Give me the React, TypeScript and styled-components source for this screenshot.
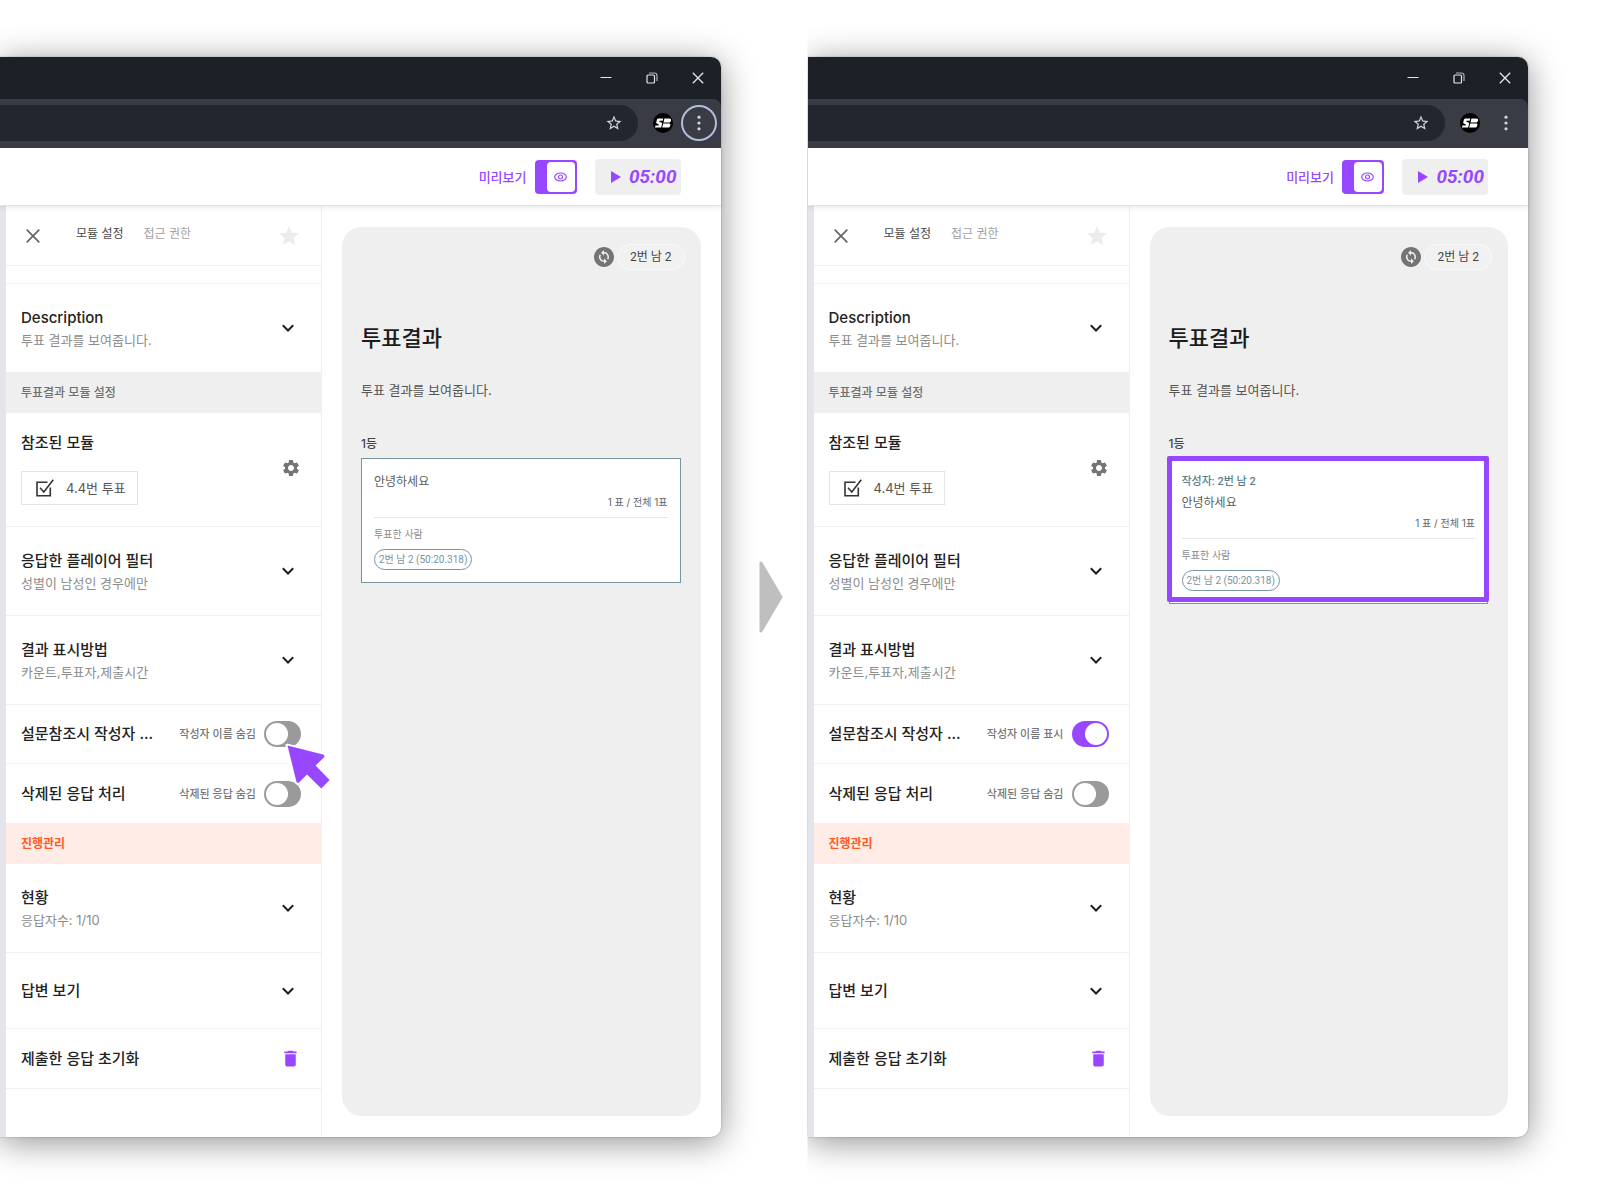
import React, { useId, useState } from 'react';
import styled, { createGlobalStyle, css } from 'styled-components';
import { MdChangeCircle, MdDelete, MdSettings, MdStar, MdStarBorder } from 'react-icons/md';

const color = {
  purple: '#9747ff',
  ink: '#222222',
  text: '#555555',
  muted: '#8c8c8c',
  line: '#f0f0f1',
  surface: '#efefef',
  slate: '#7895a3',
  slateDark: '#5c7d8e',
};

const compactFont = 'Roboto, "Noto Sans CJK KR", sans-serif';

const GlobalStyle = createGlobalStyle`
  *, *::before, *::after { box-sizing: border-box; }
  body {
    margin: 0;
    background: #ffffff;
    color: ${color.ink};
    font-family: Inter, "Noto Sans CJK KR", sans-serif;
    font-size: 13px;
    line-height: 22px;
    overflow-x: hidden;
  }
  button, input { font: inherit; color: inherit; }
  button { margin: 0; padding: 0; border: 0; background: none; cursor: pointer; }
  h1, h2, h3, p { margin: 0; font-weight: 400; }
  svg { display: block; flex: none; }
`;

const Page = styled.main`
  display: grid;
  grid-template-columns: 1fr 1fr;
  padding: 57px 0 56px;
`;

const Half = styled.section`
  display: grid;
  grid-template-columns: minmax(0, 1fr) 87px;
  align-items: center;
  clip-path: inset(-57px 0 -57px 0);
`;

const StepArrow = styled.svg`
  justify-self: center;
  margin-left: 14px;
`;

const Window = styled.div`
  border-radius: 0 10px 10px 0;
  background: #ffffff;
  box-shadow: 0 5px 34px rgba(0, 0, 0, 0.44), 0 0 2px rgba(0, 0, 0, 0.3);
`;

const ChromeBackdrop = styled.div`
  border-radius: 0 10px 0 0;
  background: #1c2027;
`;

const TitleBar = styled.div`
  display: flex;
  justify-content: flex-end;
  height: 42px;
  color: #e6e6e8;
`;

const CaptionButton = styled.button`
  display: grid;
  place-items: center;
  width: 46px;
`;

const Toolbar = styled.div`
  display: flex;
  align-items: center;
  height: 49px;
  padding: 0 4px 2px 0;
  border-radius: 0 8px 0 0;
  background: #393b45;
  color: #d4d5da;
`;

const AddressBar = styled.div`
  display: flex;
  flex: 1;
  align-items: center;
  height: 36px;
  margin-right: 15px;
  padding-right: 15px;
  border-radius: 0 18px 18px 0;
  background: #23262f;
`;

const AddressInput = styled.input`
  flex: 1;
  min-width: 0;
  border: 0;
  outline: 0;
  background: transparent;
`;

const ProfileButton = styled.button`
  margin-right: 8px;
`;

const MenuButton = styled.button<{ $ringed: boolean }>`
  display: grid;
  place-items: center;
  width: 36px;
  height: 36px;
  border: 2px solid ${(p) => (p.$ringed ? '#b1bfde' : 'transparent')};
  border-radius: 50%;
`;

const AppHeader = styled.header`
  display: flex;
  position: relative;
  align-items: center;
  justify-content: flex-end;
  height: 58px;
  padding-right: 40px;
  border-bottom: 1px solid #e2e2e8;
  background: #ffffff;
  box-shadow: 0 2px 5px rgba(0, 0, 0, 0.08);
`;

const PreviewLabel = styled.label`
  display: flex;
  align-items: center;
  gap: 8px;
  margin-right: 18px;
  color: ${color.purple};
  font-weight: 500;
`;

const PreviewSwitch = styled.span`
  display: grid;
  align-items: center;
  justify-items: end;
  width: 42px;
  height: 34px;
  border-radius: 4px;
  background: ${color.purple};
  padding: 2px;

  > * { grid-area: 1 / 1; }
`;

const PreviewInput = styled.input`
  appearance: none;
  width: 28px;
  height: 30px;
  margin: 0;
  border-radius: 4px;
  background: #ffffff;
  cursor: pointer;
`;

const EyeIcon = styled.svg`
  margin-right: 8px;
  pointer-events: none;
`;

const Timer = styled.button`
  display: flex;
  align-items: center;
  justify-content: flex-end;
  gap: 8px;
  width: 86px;
  height: 36px;
  padding-right: 4px;
  border-radius: 4px;
  background: ${color.surface};
  color: ${color.purple};
  font: italic 700 19px/36px Roboto, sans-serif;
`;

const Body = styled.div`
  display: flex;
`;

const Sidebar = styled.aside`
  flex: none;
  width: 322px;
  padding-bottom: 48px;
  border-left: 6px solid #e3e4ec;
  border-right: 1px solid ${color.line};
`;

const SidebarHeader = styled.div`
  display: flex;
  align-items: center;
  height: 60px;
  padding: 0 20px;
  border-bottom: 1px solid ${color.line};
`;

const Tabs = styled.div`
  display: flex;
  flex: 1;
  gap: 20px;
  margin: 0 0 4px 36px;
`;

const Tab = styled.button<{ $active?: boolean }>`
  color: ${(p) => (p.$active ? '#4a4a4a' : '#a2a2a2')};
  font-size: 12px;
`;

const FavoriteButton = styled.button`
  color: #ececec;
`;

const Spacer = styled.div`
  height: 18px;
  border-bottom: 1px solid ${color.line};
`;

const rowBase = css`
  display: flex;
  align-items: center;
  padding: 0 15px;
  border-bottom: 1px solid ${color.line};
`;

const Row = styled.div<{ $height: number }>`
  ${rowBase}
  min-height: ${(p) => p.$height}px;
  padding-right: 24px;
`;

const ActionRow = styled(Row)`
  padding-right: 20px;
`;

const ModuleRow = styled(ActionRow)`
  padding-bottom: 3px;
`;

const RowText = styled.div`
  flex: 1;
`;

const RowTitle = styled.h2`
  font-size: 15px;
  font-weight: 500;
  line-height: 23px;
`;

const RowNote = styled.p`
  color: ${color.muted};
`;

const SwitchRow = styled.label`
  ${rowBase}
  position: relative;
  min-height: ${(p: { $height: number }) => p.$height}px;
  padding-right: 20px;
`;

const SwitchName = styled.span`
  flex: 1;
  font-size: 15px;
  font-weight: 500;
`;

const SwitchState = styled.span`
  margin-right: 8px;
  color: #777777;
  font-size: 11px;
  font-weight: 500;
`;

const Switch = styled.input`
  appearance: none;
  display: flex;
  width: 37px;
  height: 26px;
  margin: 0;
  padding: 2px;
  border-radius: 13px;
  background: #9a9a9a;
  cursor: pointer;

  &::before {
    content: '';
    width: 22px;
    height: 22px;
    border-radius: 50%;
    background: #ffffff;
  }

  &:checked {
    justify-content: flex-end;
    background: ${color.purple};
  }
`;

const Pointer = styled.svg`
  position: absolute;
  right: -12px;
  top: 36px;
  z-index: 1;
  pointer-events: none;
`;

const Band = styled.h2<{ $accent?: boolean }>`
  padding: 0 15px;
  background: ${(p) => (p.$accent ? '#ffece6' : color.surface)};
  color: ${(p) => (p.$accent ? '#ff5a26' : '#707070')};
  font-size: 12px;
  font-weight: ${(p) => (p.$accent ? 700 : 500)};
  line-height: 40px;
`;

const ModuleChip = styled.button`
  display: flex;
  align-items: center;
  gap: 12px;
  height: 34px;
  margin-top: 17px;
  padding: 0 11px 0 14px;
  border: 1px solid #e4e4e8;
  color: ${color.text};
`;

const Preview = styled.div`
  flex: 1;
  min-width: 0;
  padding: 21px 20px;
`;

const PreviewCard = styled.article`
  height: 100%;
  padding: 17px 20px 17px 19px;
  border-radius: 20px;
  background: ${color.surface};
`;

const PlayerBar = styled.div`
  display: flex;
  align-items: center;
  justify-content: flex-end;
  gap: 1px;
  margin-right: -4px;
  color: #747474;
`;

const PlayerPill = styled.button`
  height: 26px;
  padding: 0 12px;
  border: 1px solid #fafafa;
  border-radius: 13px;
  background: #f1f1f1;
  color: #444444;
  font-family: ${compactFont};
  font-size: 12px;
`;

const PreviewTitle = styled.h1`
  margin-top: 52px;
  color: #1c1c1c;
  font-size: 22px;
  font-weight: 500;
  line-height: 32px;
`;

const PreviewNote = styled.p`
  margin-top: 25px;
  color: ${color.text};
`;

const Rank = styled.h3`
  margin-top: 33px;
  color: #444444;
  font-size: 12px;
  font-weight: 500;
  line-height: 20px;
`;

const Result = styled.div`
  position: relative;
  margin-top: 4px;
  padding: 12px;
  border: 1px solid ${color.slate};
  background: #ffffff;
`;

const Highlight = styled.span`
  position: absolute;
  inset: -3px -2px 1px -3px;
  border: 5px solid ${color.purple};
  border-radius: 2px;
  pointer-events: none;
`;

const Author = styled.p`
  color: ${color.slateDark};
  font-family: ${compactFont};
  font-size: 11px;
  font-weight: 500;
  line-height: 21px;
`;

const Answer = styled.p`
  color: #5c5c5c;
  font-size: 12px;
  line-height: 21px;
`;

const Votes = styled.p`
  padding-bottom: 4px;
  border-bottom: 1px solid #e4e6ee;
  color: #666666;
  font-size: 10px;
  line-height: 21px;
  text-align: right;
`;

const VotersTitle = styled.p`
  margin-top: 6px;
  color: ${color.muted};
  font-size: 10px;
  line-height: 20px;
`;

const Voter = styled.span`
  display: inline-block;
  height: 21px;
  margin-top: 5px;
  padding: 0 4px;
  border: 1px solid ${color.slate};
  border-radius: 11px;
  color: ${color.slate};
  font-family: ${compactFont};
  font-size: 10px;
  line-height: 19px;
  vertical-align: top;
`;

const Chevron = () => (
  <svg width="18" height="18" viewBox="0 0 18 18" fill="none" stroke="#1e1e1e" strokeWidth="2">
    <path d="M3.8 6.3 9 11.5l5.2-5.2" />
  </svg>
);

interface FoldRowProps {
  title: string;
  note?: string;
  height?: number;
}

const FoldRow = ({ title, note, height = 89 }: FoldRowProps) => (
  <Row $height={height}>
    <RowText>
      <RowTitle>{title}</RowTitle>
      {note && <RowNote>{note}</RowNote>}
    </RowText>
    <button type="button" aria-label={title}>
      <Chevron />
    </button>
  </Row>
);

interface SettingSwitchProps {
  name: string;
  on: string;
  off: string;
  height: number;
  initial?: boolean;
  pointed?: boolean;
}

const SettingSwitch = ({ name, on, off, height, initial = false, pointed }: SettingSwitchProps) => {
  const id = useId();
  const [checked, setChecked] = useState(initial);
  return (
    <SwitchRow htmlFor={id} $height={height}>
      <SwitchName>{name}</SwitchName>
      <SwitchState>{checked ? on : off}</SwitchState>
      <Switch id={id} type="checkbox" checked={checked} onChange={(e) => setChecked(e.target.checked)} />
      {pointed && (
        <Pointer width="50" height="50" viewBox="0 0 50 50">
          <path
            d="M4.5 4.6 40 13.6c1.6.5 1.9 2 .8 3L32.6 24.6l14 14.4-8.3 8.5L24 33.4l-7.8 7.8c-1 1-2.5.6-2.8-.8z"
            fill={color.purple}
            stroke="#ffffff"
            strokeWidth="4"
            strokeLinejoin="round"
            paintOrder="stroke"
          />
        </Pointer>
      )}
    </SwitchRow>
  );
};

const BrowserChrome = ({ menuFocused }: { menuFocused: boolean }) => (
  <ChromeBackdrop>
    <TitleBar>
      <CaptionButton type="button" aria-label="최소화">
        <svg width="12" height="12" viewBox="0 0 12 12" stroke="currentColor">
          <path d="M.5 5.5h11" />
        </svg>
      </CaptionButton>
      <CaptionButton type="button" aria-label="이전 크기로 복원">
        <svg width="12" height="12" viewBox="0 0 12 12" fill="none" stroke="currentColor" strokeWidth="1.2">
          <rect x="1" y="3" width="7.5" height="8" rx="1" />
          <path d="M3 1h5.500a2.500 2.500 0 0 1 2.500 2.500V9" opacity=".75" />
        </svg>
      </CaptionButton>
      <CaptionButton type="button" aria-label="닫기">
        <svg width="12" height="12" viewBox="0 0 12 12" stroke="currentColor" strokeWidth="1.3">
          <path d="m.8.8 10.4 10.4M11.2.8.8 11.2" />
        </svg>
      </CaptionButton>
    </TitleBar>
    <Toolbar>
      <AddressBar>
        <AddressInput type="text" aria-label="주소창" />
        <button type="button" aria-label="북마크">
          <MdStarBorder size={18} />
        </button>
      </AddressBar>
      <ProfileButton type="button" aria-label="프로필">
        <svg width="20" height="20" viewBox="0 0 20 20" fill="#ffffff">
          <circle cx="10" cy="10" r="10" fill="#000000" />
          <path d="M5.300 5.600h5l-.6 2.200H6.400l-.2.800 3 1.500-1 4.500H1.900l.6-2.100h3.300l.2-.8-2.900-1.600.5-2.200c.3-1.400.8-2.300 1.700-2.300z" />
          <path d="M11.400 5.600h4.800c1.600 0 2.100.9 1.800 2.100-.2.900-.7 1.400-1.400 1.700h-6.100z" />
          <path d="M10.200 10.400h6.200c1 .3 1.200 1 .9 2-.4 1.500-1.200 2.200-2.700 2.200H9.200z" />
        </svg>
      </ProfileButton>
      <MenuButton type="button" aria-label="메뉴" $ringed={menuFocused}>
        <svg width="4" height="16" viewBox="0 0 4 16" fill="currentColor">
          <circle cx="2" cy="2.2" r="1.6" />
          <circle cx="2" cy="8" r="1.6" />
          <circle cx="2" cy="13.8" r="1.6" />
        </svg>
      </MenuButton>
    </Toolbar>
  </ChromeBackdrop>
);

const TopBar = () => {
  const id = useId();
  return (
    <AppHeader>
      <PreviewLabel htmlFor={id}>
        미리보기
        <PreviewSwitch>
          <PreviewInput id={id} type="checkbox" defaultChecked />
          <EyeIcon width="13" height="10" viewBox="0 0 13 10" fill="none" stroke={color.purple} strokeWidth="1.2">
            <ellipse cx="6.5" cy="5" rx="5.8" ry="4" />
            <circle cx="6.5" cy="5" r="2" />
          </EyeIcon>
        </PreviewSwitch>
      </PreviewLabel>
      <Timer type="button">
        <svg width="10" height="12" viewBox="0 0 10 12" fill="currentColor">
          <path d="M0 0v12l10-6z" />
        </svg>
        05:00
      </Timer>
    </AppHeader>
  );
};

const SettingsPanel = ({ authorShown }: { authorShown: boolean }) => (
  <Sidebar>
    <SidebarHeader>
      <button type="button" aria-label="설정 닫기">
        <svg width="14" height="14" viewBox="0 0 14 14" stroke="#666666" strokeWidth="1.7">
          <path d="m.7.7 12.6 12.6M13.3.7.7 13.3" />
        </svg>
      </button>
      <Tabs>
        <Tab type="button" $active>모듈 설정</Tab>
        <Tab type="button">접근 권한</Tab>
      </Tabs>
      <FavoriteButton type="button" aria-label="즐겨찾기">
        <MdStar size={24} />
      </FavoriteButton>
    </SidebarHeader>
    <Spacer />
    <FoldRow title="Description" note="투표 결과를 보여줍니다." />
    <Band>투표결과 모듈 설정</Band>
    <ModuleRow $height={114}>
      <RowText>
        <RowTitle>참조된 모듈</RowTitle>
        <ModuleChip type="button">
          <svg width="18" height="18" viewBox="0 0 18 18" fill="none" stroke="#333333" strokeWidth="1.6">
            <path d="M11.5 3.2H1v13.6h13.3V8.5" />
            <path d="m4 8.8 3.8 4.2L17.3.8" />
          </svg>
          4.4번 투표
        </ModuleChip>
      </RowText>
      <button type="button" aria-label="모듈 설정">
        <MdSettings size={20} color="#757575" />
      </button>
    </ModuleRow>
    <FoldRow title="응답한 플레이어 필터" note="성별이 남성인 경우에만" />
    <FoldRow title="결과 표시방법" note="카운트,투표자,제출시간" />
    <SettingSwitch
      name="설문참조시 작성자 ..."
      on="작성자 이름 표시"
      off="작성자 이름 숨김"
      height={59}
      initial={authorShown}
      pointed={!authorShown}
    />
    <SettingSwitch name="삭제된 응답 처리" on="삭제된 응답 표시" off="삭제된 응답 숨김" height={60} />
    <Band $accent>진행관리</Band>
    <FoldRow title="현황" note="응답자수: 1/10" />
    <FoldRow title="답변 보기" height={76} />
    <ActionRow $height={60}>
      <RowText>
        <RowTitle>제출한 응답 초기화</RowTitle>
      </RowText>
      <button type="button" aria-label="제출한 응답 초기화">
        <MdDelete size={21} color={color.purple} />
      </button>
    </ActionRow>
  </Sidebar>
);

const ResultPreview = ({ authorShown }: { authorShown: boolean }) => (
  <Preview>
    <PreviewCard>
      <PlayerBar>
        <MdChangeCircle size={24} />
        <PlayerPill type="button">2번 남 2</PlayerPill>
      </PlayerBar>
      <PreviewTitle>투표결과</PreviewTitle>
      <PreviewNote>투표 결과를 보여줍니다.</PreviewNote>
      <Rank>1등</Rank>
      <Result>
        {authorShown && <Author>작성자: 2번 남 2</Author>}
        <Answer>안녕하세요</Answer>
        <Votes>1 표 / 전체 1표</Votes>
        <VotersTitle>투표한 사람</VotersTitle>
        <Voter>2번 남 2 (50:20.318)</Voter>
        {authorShown && <Highlight />}
      </Result>
    </PreviewCard>
  </Preview>
);

const Screen = ({ authorShown }: { authorShown: boolean }) => (
  <Window>
    <BrowserChrome menuFocused={!authorShown} />
    <TopBar />
    <Body>
      <SettingsPanel authorShown={authorShown} />
      <ResultPreview authorShown={authorShown} />
    </Body>
  </Window>
);

export default function App() {
  return (
    <>
      <GlobalStyle />
      <Page>
        <Half>
          <Screen authorShown={false} />
          <StepArrow width="24" height="72" viewBox="0 0 24 72">
            <path
              d="M2 2v68L22 36z"
              fill="#bfbfbf"
              stroke="#bfbfbf"
              strokeWidth="3"
              strokeLinejoin="round"
            />
          </StepArrow>
        </Half>
        <Half>
          <Screen authorShown />
        </Half>
      </Page>
    </>
  );
}
